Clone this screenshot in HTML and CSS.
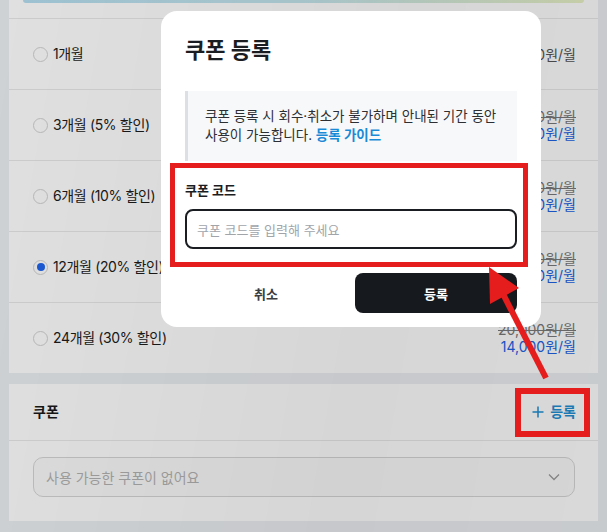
FILE: index.html
```html
<!DOCTYPE html>
<html lang="ko">
<head>
<meta charset="utf-8">
<title>쿠폰 등록</title>
<link rel="stylesheet" href="styles.css">
</head>
<body>
<div class="page">
  <section class="card plans-card">
    <div class="banner"></div>
    <ul class="plans">
      <li class="plan">
        <label class="plan-name"><span class="radio"></span>1개월</label>
        <div class="price"><span class="regular">20,000원/월</span></div>
      </li>
      <li class="plan">
        <label class="plan-name"><span class="radio"></span>3개월 (5% 할인)</label>
        <div class="price"><span class="old">20,000원/월</span><span class="new">19,000원/월</span></div>
      </li>
      <li class="plan">
        <label class="plan-name"><span class="radio"></span>6개월 (10% 할인)</label>
        <div class="price"><span class="old">20,000원/월</span><span class="new">18,000원/월</span></div>
      </li>
      <li class="plan">
        <label class="plan-name"><span class="radio checked"></span>12개월 (20% 할인)</label>
        <div class="price"><span class="old">20,000원/월</span><span class="new">16,000원/월</span></div>
      </li>
      <li class="plan">
        <label class="plan-name"><span class="radio"></span>24개월 (30% 할인)</label>
        <div class="price"><span class="old">20,000원/월</span><span class="new">14,000원/월</span></div>
      </li>
    </ul>
  </section>

  <section class="card coupon-card">
    <div class="coupon-head">
      <h2 class="coupon-title">쿠폰</h2>
      <button class="add-btn" type="button">
        <svg class="plus" width="12" height="12" viewBox="0 0 12 12"><path d="M6 0.5V11.5M0.5 6H11.5" stroke="currentColor" stroke-width="1.5" fill="none"/></svg>
        <span>등록</span>
      </button>
    </div>
    <div class="coupon-body">
      <div class="select">
        <span class="select-text">사용 가능한 쿠폰이 없어요</span>
        <svg class="chevron" width="12" height="8" viewBox="0 0 12 8"><path d="M1 1.5L6 6.5L11 1.5" stroke="currentColor" stroke-width="1.3" fill="none"/></svg>
      </div>
    </div>
  </section>
</div>

<div class="dim"></div>

<div class="modal">
  <h1 class="modal-title">쿠폰 등록</h1>
  <div class="notice">쿠폰 등록 시 회수·취소가 불가하며 안내된 기간 동안 사용이 가능합니다. <a class="guide" href="#">등록 가이드</a></div>
  <div class="field">
    <div class="field-label">쿠폰 코드</div>
    <div class="input"><span class="placeholder">쿠폰 코드를 입력해 주세요</span></div>
  </div>
  <div class="actions">
    <button class="btn btn-cancel" type="button">취소</button>
    <button class="btn btn-submit" type="button">등록</button>
  </div>
</div>

<div class="mark mark-field"></div>
<div class="mark mark-add"></div>
<svg class="arrow" width="607" height="532" viewBox="0 0 607 532">
  <line x1="546" y1="378" x2="502" y2="292" stroke="#e51d1d" stroke-width="6"/>
  <polygon points="489,267 519,288 490,304" fill="#e51d1d"/>
</svg>
</body>
</html>
```

FILE: styles.css
```css
html, body {
  margin: 0;
  padding: 0;
}
body {
  width: 607px;
  height: 532px;
  overflow: hidden;
  background: #eceff3;
  font-family: "Inter", "Noto Sans CJK KR", sans-serif;
  color: #1f2226;
}
ul { list-style: none; margin: 0; padding: 0; }
h1, h2 { margin: 0; }
button { font-family: inherit; border: 0; background: none; padding: 0; cursor: pointer; }

.page {
  padding: 0 9px;
}
.card {
  background: #ffffff;
}
.banner {
  height: 3px;
  margin: 0 14px;
  border-radius: 0 0 4px 4px;
  background: linear-gradient(90deg, #b4ddef, #c4e6ee 50%, #e9f2c6);
}
.plans {
  margin-top: 15px;
}
.plan {
  box-sizing: border-box;
  height: 71px;
  border-top: 1px solid #e9e9e9;
  display: flex;
  align-items: center;
  justify-content: space-between;
  padding: 0 22px 0 24px;
}
.plan-name {
  display: flex;
  align-items: center;
  gap: 5px;
  font-size: 14px;
  line-height: 20px;
  letter-spacing: -0.35px;
  color: #1c1c1c;
}
.radio {
  box-sizing: border-box;
  width: 15px;
  height: 15px;
  border-radius: 50%;
  border: 1px solid #d2d2d2;
  background: #fff;
  display: flex;
  align-items: center;
  justify-content: center;
}
.radio.checked::after {
  content: "";
  width: 8px;
  height: 8px;
  border-radius: 50%;
  background: #1f66ee;
}
.price {
  display: flex;
  flex-direction: column;
  align-items: flex-end;
  font-size: 14px;
  line-height: 17px;
}
.regular { color: #555; }
.old {
  color: #7a7a7a;
  text-decoration: line-through;
}
.new { color: #2162e6; }

.coupon-card {
  margin-top: 11px;
}
.coupon-head {
  box-sizing: border-box;
  height: 57px;
  border-bottom: 1px solid #e9e9e9;
  display: flex;
  align-items: center;
  justify-content: space-between;
  padding: 0 22px 0 24px;
}
.coupon-title {
  font-size: 14px;
  font-weight: 700;
  line-height: 20px;
  color: #1a1a1a;
}
.add-btn {
  display: flex;
  align-items: center;
  gap: 6px;
  color: #1f8fd4;
  font-size: 14px;
  font-weight: 700;
  line-height: 20px;
}
.coupon-body {
  padding: 16px 23px 24px 24px;
}
.select {
  box-sizing: border-box;
  height: 40px;
  border: 1px solid #d6d6d6;
  border-radius: 10px;
  background: #fbfbfb;
  display: flex;
  align-items: center;
  justify-content: space-between;
  padding: 0 14px 0 12px;
}
.select-text {
  font-size: 14px;
  color: #b3b3b3;
}
.chevron { color: #9b9b9b; }

.dim {
  position: fixed;
  inset: 0;
  background: linear-gradient(100deg, rgba(0,0,0,0.12), rgba(0,0,0,0.16) 60%, rgba(0,0,0,0.15));
}

.modal {
  position: fixed;
  left: 161px;
  top: 11px;
  width: 380px;
  box-sizing: border-box;
  padding: 24px 24px 14px 24px;
  background: #ffffff;
  border-radius: 16px;
}
.modal-title {
  font-size: 22px;
  font-weight: 700;
  line-height: 30px;
  color: #1a1d21;
}
.notice {
  margin-top: 26px;
  background: #f7f8fa;
  border-left: 3px solid #dcdfe4;
  padding: 16px 12px 16px 17px;
  font-size: 13.5px;
  line-height: 19px;
  word-break: keep-all;
  color: #2c2f33;
}
.guide {
  color: #1a8ad6;
  font-weight: 700;
  text-decoration: none;
}
.field {
  margin-top: 20px;
}
.field-label {
  font-size: 13px;
  font-weight: 700;
  line-height: 18px;
  color: #1a1d21;
}
.input {
  margin-top: 10px;
  box-sizing: border-box;
  height: 40px;
  border: 2px solid #1a1d21;
  border-radius: 8px;
  display: flex;
  align-items: center;
  padding: 0 10px;
}
.placeholder {
  font-size: 13px;
  color: #a1a5aa;
}
.actions {
  margin-top: 24px;
  display: flex;
  gap: 8px;
}
.btn {
  flex: 1;
  height: 40px;
  border-radius: 8px;
  font-size: 13px;
  font-weight: 700;
}
.btn-cancel {
  color: #3a3d42;
  background: #fff;
}
.btn-submit {
  color: #ffffff;
  background: #16191e;
}

.mark {
  position: fixed;
  box-sizing: border-box;
  border-style: solid;
  border-color: #e51d1d;
}
.mark-field {
  left: 170px;
  top: 163px;
  width: 358px;
  height: 104px;
  border-width: 5px;
}
.mark-add {
  left: 515px;
  top: 388px;
  width: 75px;
  height: 49px;
  border-width: 6px;
}
.arrow {
  position: fixed;
  left: 0;
  top: 0;
  pointer-events: none;
}
```
